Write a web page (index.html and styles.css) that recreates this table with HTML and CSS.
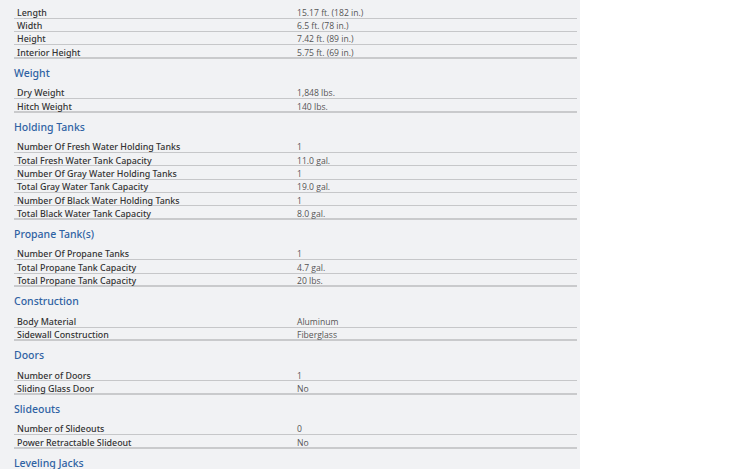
FILE: index.html
```html
<!DOCTYPE html>
<html>
<head>
<meta charset="utf-8">
<link rel="stylesheet" href="styles.css">
</head>
<body>
<div class="panel">
  <div class="section">
    <div class="row"><span class="label">Length</span><span class="value">15.17 ft. (182 in.)</span></div>
    <div class="row"><span class="label">Width</span><span class="value">6.5 ft. (78 in.)</span></div>
    <div class="row"><span class="label">Height</span><span class="value">7.42 ft. (89 in.)</span></div>
    <div class="row"><span class="label">Interior Height</span><span class="value">5.75 ft. (69 in.)</span></div>
  </div>
  <h2 class="heading">Weight</h2>
  <div class="section">
    <div class="row"><span class="label">Dry Weight</span><span class="value">1,848 lbs.</span></div>
    <div class="row"><span class="label">Hitch Weight</span><span class="value">140 lbs.</span></div>
  </div>
  <h2 class="heading">Holding Tanks</h2>
  <div class="section">
    <div class="row"><span class="label">Number Of Fresh Water Holding Tanks</span><span class="value">1</span></div>
    <div class="row"><span class="label">Total Fresh Water Tank Capacity</span><span class="value">11.0 gal.</span></div>
    <div class="row"><span class="label">Number Of Gray Water Holding Tanks</span><span class="value">1</span></div>
    <div class="row"><span class="label">Total Gray Water Tank Capacity</span><span class="value">19.0 gal.</span></div>
    <div class="row"><span class="label">Number Of Black Water Holding Tanks</span><span class="value">1</span></div>
    <div class="row"><span class="label">Total Black Water Tank Capacity</span><span class="value">8.0 gal.</span></div>
  </div>
  <h2 class="heading">Propane Tank(s)</h2>
  <div class="section">
    <div class="row"><span class="label">Number Of Propane Tanks</span><span class="value">1</span></div>
    <div class="row"><span class="label">Total Propane Tank Capacity</span><span class="value">4.7 gal.</span></div>
    <div class="row"><span class="label">Total Propane Tank Capacity</span><span class="value">20 lbs.</span></div>
  </div>
  <h2 class="heading">Construction</h2>
  <div class="section">
    <div class="row"><span class="label">Body Material</span><span class="value">Aluminum</span></div>
    <div class="row"><span class="label">Sidewall Construction</span><span class="value">Fiberglass</span></div>
  </div>
  <h2 class="heading">Doors</h2>
  <div class="section">
    <div class="row"><span class="label">Number of Doors</span><span class="value">1</span></div>
    <div class="row"><span class="label">Sliding Glass Door</span><span class="value">No</span></div>
  </div>
  <h2 class="heading">Slideouts</h2>
  <div class="section">
    <div class="row"><span class="label">Number of Slideouts</span><span class="value">0</span></div>
    <div class="row"><span class="label">Power Retractable Slideout</span><span class="value">No</span></div>
  </div>
  <h2 class="heading">Leveling Jacks</h2>
</div>
</body>
</html>
```

FILE: styles.css
```css
html, body {
  margin: 0;
  padding: 0;
  background: #ffffff;
  overflow: hidden;
}
.panel {
  width: 563px;
  min-height: 469px;
  background: #f1f2f4;
  padding: 5.3px 3px 0 14px;
  box-sizing: content-box;
  font-family: "Open Sans", "Noto Sans", sans-serif;
}
.section {
  display: flex;
  flex-direction: column;
}
.row {
  display: grid;
  grid-template-columns: 283px 1fr;
  height: 13.35px;
  box-sizing: border-box;
  border-bottom: 1px solid #c6c7c9;
  align-items: center;
  font-size: 8.9px;
  line-height: 12px;
}
.row:last-child {
  border-bottom: 2px solid #c9cacc;
}
.label,
.value {
  padding-top: 1.5px;
  white-space: nowrap;
}
.label {
  padding-left: 3px;
  color: #333;
  font-family: "Noto Sans", "Open Sans", sans-serif;
  font-weight: 500;
  font-size: 8.9px;
}
.value {
  color: #555;
  font-weight: 400;
  font-size: 8.6px;
}
.heading {
  margin: 0;
  padding: 7px 0 6.2px 0;
  line-height: 14px;
  font-family: "Noto Sans", "Open Sans", sans-serif;
  font-size: 10.5px;
  font-weight: 500;
  color: #2f62a3;
}
```
